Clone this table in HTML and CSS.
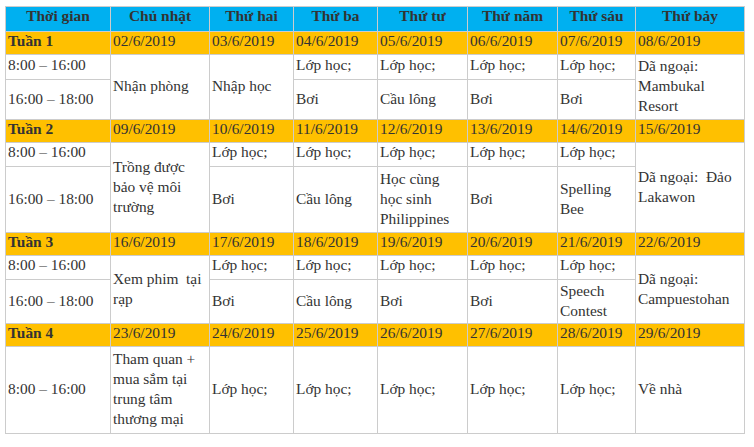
FILE: index.html
```html
<!DOCTYPE html>
<html lang="vi">
<head>
<meta charset="utf-8">
<link rel="stylesheet" href="styles.css">
</head>
<body>
<table class="schedule">
  <colgroup>
    <col class="c1"><col class="c2"><col class="c3"><col class="c4"><col class="c5"><col class="c6"><col class="c7"><col class="c8">
  </colgroup>
  <thead>
    <tr class="head">
      <th>Thời gian</th><th>Chủ nhật</th><th>Thứ hai</th><th>Thứ ba</th><th>Thứ tư</th><th>Thứ năm</th><th>Thứ sáu</th><th>Thứ bảy</th>
    </tr>
  </thead>
  <tbody>
    <tr class="week">
      <td class="wk">Tuần 1</td><td>02/6/2019</td><td>03/6/2019</td><td>04/6/2019</td><td>05/6/2019</td><td>06/6/2019</td><td>07/6/2019</td><td>08/6/2019</td>
    </tr>
    <tr class="h25 slim">
      <td>8:00 – 16:00</td><td rowspan="2">Nhận phòng</td><td rowspan="2">Nhập học</td><td>Lớp học;</td><td>Lớp học;</td><td>Lớp học;</td><td>Lớp học;</td><td rowspan="2">Dã ngoại: Mambukal Resort</td>
    </tr>
    <tr class="h40">
      <td>16:00 – 18:00</td><td>Bơi</td><td>Cầu lông</td><td>Bơi</td><td>Bơi</td>
    </tr>
    <tr class="week">
      <td class="wk">Tuần 2</td><td>09/6/2019</td><td>10/6/2019</td><td>11/6/2019</td><td>12/6/2019</td><td>13/6/2019</td><td>14/6/2019</td><td>15/6/2019</td>
    </tr>
    <tr class="h24 slim">
      <td>8:00 – 16:00</td><td rowspan="2">Trồng được bảo vệ môi trường</td><td>Lớp học;</td><td>Lớp học;</td><td>Lớp học;</td><td>Lớp học;</td><td>Lớp học;</td><td rowspan="2">Dã ngoại:&nbsp; Đảo Lakawon</td>
    </tr>
    <tr class="h66">
      <td>16:00 – 18:00</td><td>Bơi</td><td>Cầu lông</td><td>Học cùng học sinh Philippines</td><td>Bơi</td><td>Spelling Bee</td>
    </tr>
    <tr class="week">
      <td class="wk">Tuần 3</td><td>16/6/2019</td><td>17/6/2019</td><td>18/6/2019</td><td>19/6/2019</td><td>20/6/2019</td><td>21/6/2019</td><td>22/6/2019</td>
    </tr>
    <tr class="h24 slim">
      <td>8:00 – 16:00</td><td rowspan="2">Xem phim&nbsp; tại rạp</td><td>Lớp học;</td><td>Lớp học;</td><td>Lớp học;</td><td>Lớp học;</td><td>Lớp học;</td><td rowspan="2">Dã ngoại: Campuestohan</td>
    </tr>
    <tr class="h44">
      <td>16:00 – 18:00</td><td>Bơi</td><td>Cầu lông</td><td>Bơi</td><td>Bơi</td><td>Speech Contest</td>
    </tr>
    <tr class="week">
      <td class="wk">Tuần 4</td><td>23/6/2019</td><td>24/6/2019</td><td>25/6/2019</td><td>26/6/2019</td><td>27/6/2019</td><td>28/6/2019</td><td>29/6/2019</td>
    </tr>
    <tr class="h87">
      <td>8:00 – 16:00</td><td>Tham quan + mua sắm tại trung tâm thương mại</td><td>Lớp học;</td><td>Lớp học;</td><td>Lớp học;</td><td>Lớp học;</td><td>Lớp học;</td><td>Về nhà</td>
    </tr>
  </tbody>
</table>
</body>
</html>
```

FILE: styles.css
```css
html, body {
  margin: 0;
  padding: 0;
  background: #ffffff;
}
body {
  padding: 6px 0 0 5px;
  font-family: "Liberation Serif", "Times New Roman", serif;
  font-size: 15.4px;
  line-height: 20px;
  color: #333333;
}
.schedule {
  border-collapse: collapse;
  table-layout: fixed;
  width: 739px;
}
.c1 { width: 105px; }
.c2 { width: 99px; }
.c3 { width: 84px; }
.c4 { width: 84px; }
.c5 { width: 90px; }
.c6 { width: 90px; }
.c7 { width: 78px; }
.c8 { width: 109px; }
.schedule th,
.schedule td {
  border: 1px solid #cccccc;
  padding: 0 2px 2px 2px;
  vertical-align: middle;
  text-align: left;
  font-weight: normal;
}
.schedule .head th {
  background: #00b0f0;
  font-weight: bold;
  text-align: center;
  color: #333333;
  line-height: 18px;
  padding-bottom: 6px;
}
.schedule .week td {
  background: #ffc000;
  line-height: 18px;
  padding-bottom: 4px;
}
.schedule .week .wk {
  font-weight: bold;
}
.schedule .slim td:not([rowspan]) {
  line-height: 18px;
  padding-bottom: 5px;
}
.head { height: 25px; }
.week { height: 23px; }
.h25 { height: 25px; }
.h24 { height: 24px; }
.h40 { height: 40px; }
.h66 { height: 66px; }
.h44 { height: 44px; }
.h87 { height: 87px; }
```
